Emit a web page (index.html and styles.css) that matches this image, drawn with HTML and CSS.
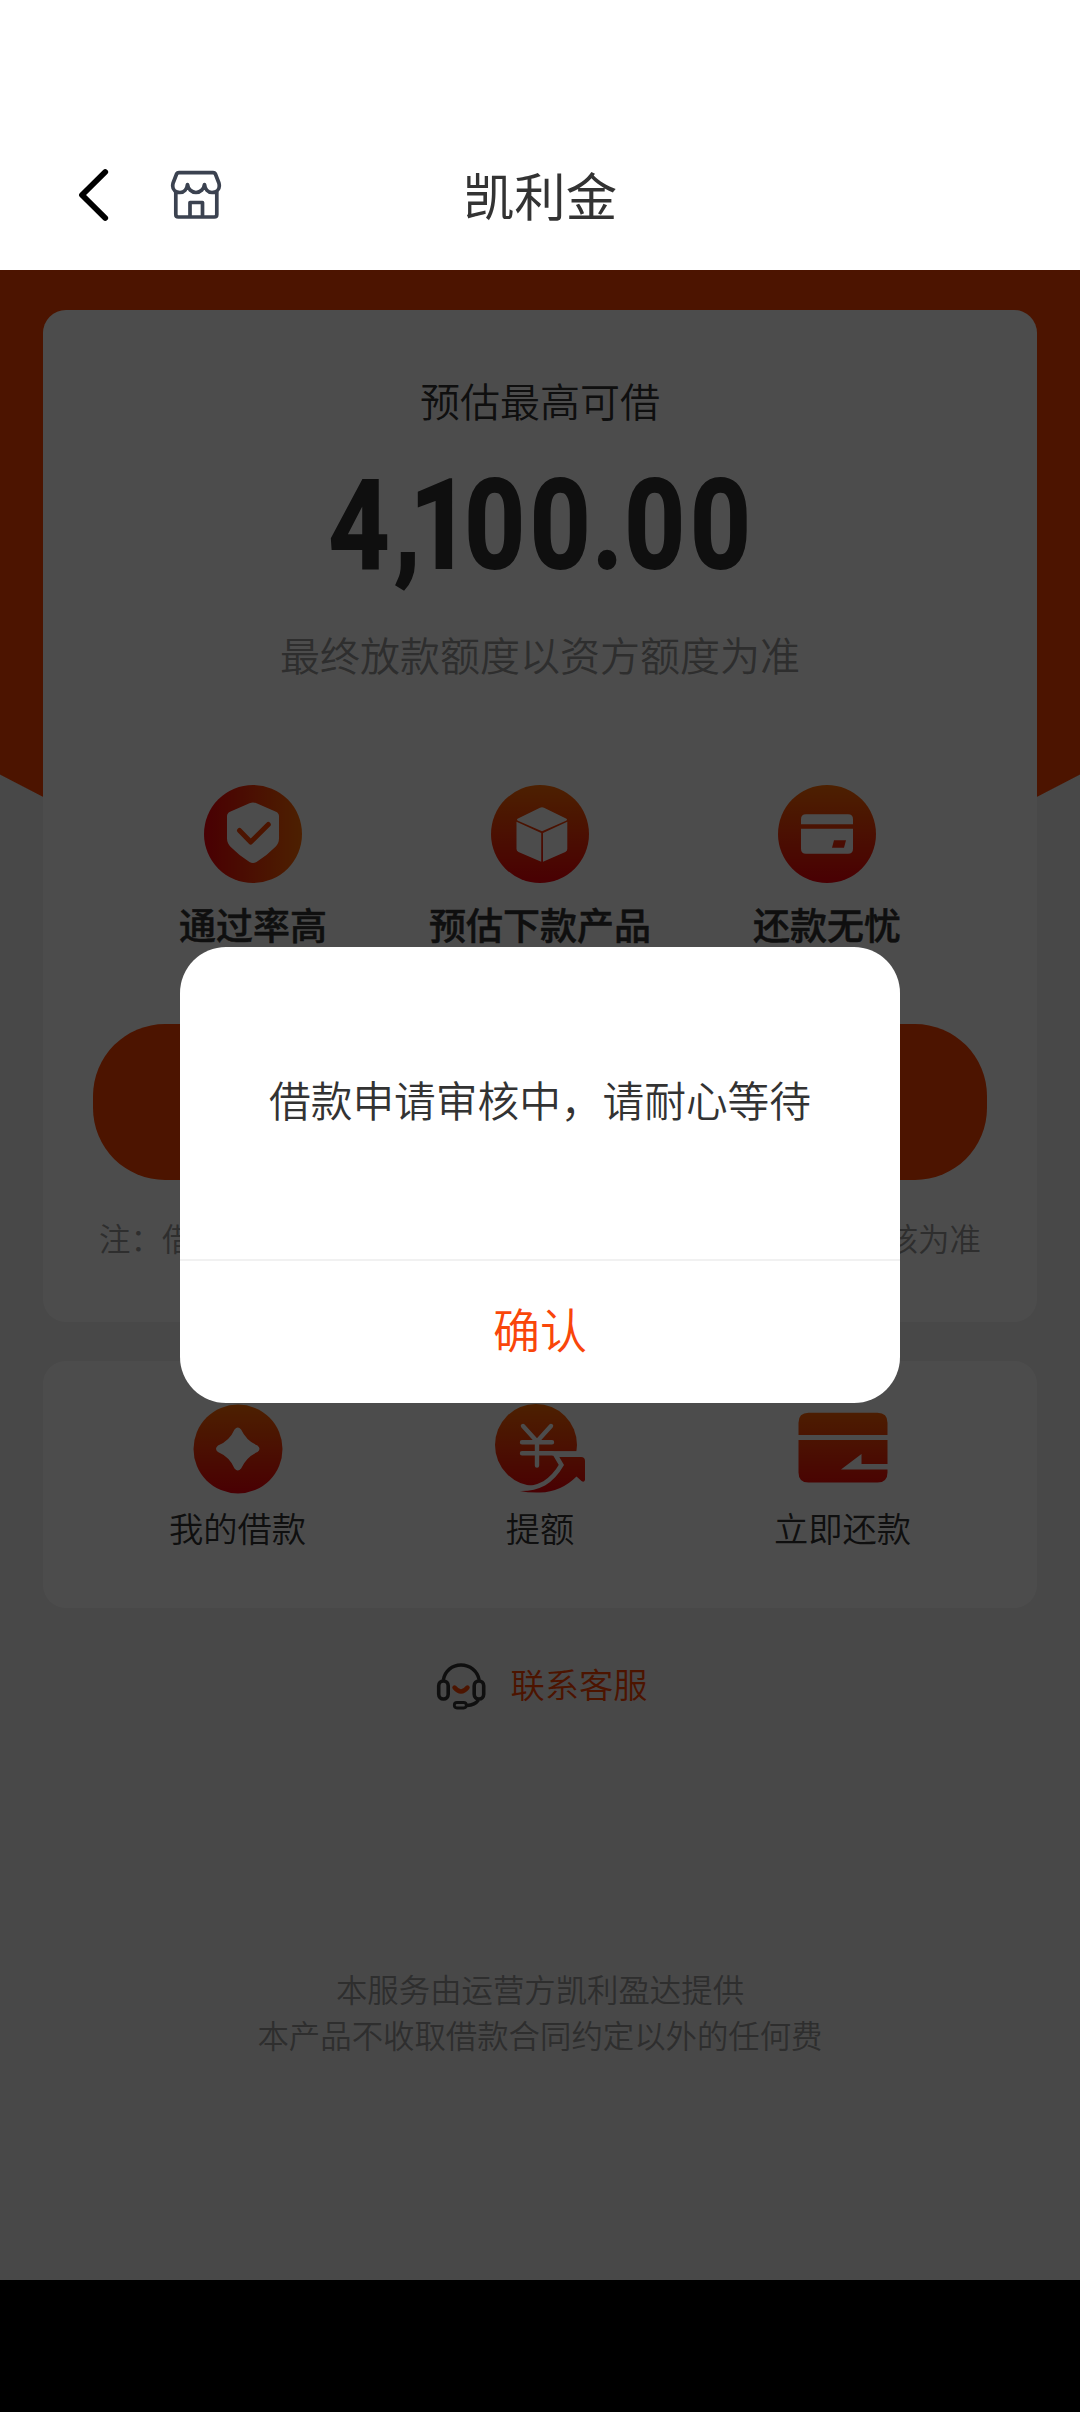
FILE: index.html
```html
<!DOCTYPE html>
<html lang="zh-CN">
<head>
<meta charset="utf-8">
<title>凯利金</title>
<link rel="stylesheet" href="styles.css">
</head>
<body>
<header class="navbar">
  <div class="nav-actions">
    <svg class="back-icon" viewBox="0 0 30 52"><path d="M26.200 3 3 26 26.200 49"/></svg>
    <svg class="store-icon" viewBox="0 0 50 48"><path d="M8 1.700h34q2 0 2.600 1.800l3.300 8.500q.4 1.500.4 3c0 4-3.300 6.500-7.300 6.500S34 18 33.500 13.500C33 18 29.500 21.500 25 21.500S17 18 16.500 13.500C16 18 13 21.500 9 21.500S1.700 19 1.700 15q0-1.500.4-3l3.300-8.500Q6 1.700 8 1.700zM4.800 21v22.500q0 2.500 2.500 2.500h36q2.500 0 2.500-2.500V21M19 46V31.500h12.500V46"/></svg>
  </div>
  <h1 class="nav-title">凯利金</h1>
</header>

<main class="page">
  <section class="hero">
    <div class="card quota-card">
      <p class="quota-label">预估最高可借</p>
      <p class="quota-amount"><span class="amount-text">4<span class="comma">,</span><span class="one">1</span>00<span class="dot">.</span>00</span></p>
      <p class="quota-tip">最终放款额度以资方额度为准</p>
      <ul class="features">
        <li class="feature">
          <svg class="feature-icon" viewBox="0 0 98 98">
            <defs><linearGradient id="warm-x"><stop offset="0" stop-color="#f5000a"/><stop offset="1" stop-color="#ff6c04"/></linearGradient>
            <linearGradient id="warm-y" x2="0" y2="1"><stop offset="0" stop-color="#ff6c04"/><stop offset="1" stop-color="#f5000a"/></linearGradient></defs>
            <circle cx="49" cy="49" r="49" fill="url(#warm-x)"/>
            <path d="M45.500 18.300q3.500-1.800 7 0L72 26.800q3 1.500 3 4.500v22q0 5-3.500 8.500Q62.500 71 52.500 77q-3.500 2-7 0Q35.500 71 26.500 61.800 23 58 23 53.300v-22q0-3 3-4.500z" fill="#fff"/>
            <path d="M35.500 45.500 46.700 57 64.300 39.500" fill="none" stroke="#ff4400" stroke-width="5" stroke-linecap="round" stroke-linejoin="round"/>
          </svg>
          <span>通过率高</span>
        </li>
        <li class="feature">
          <svg class="feature-icon" viewBox="0 0 98 98">
            <circle cx="49" cy="49" r="49" fill="url(#warm-y)"/>
            <path d="M49 22.700q2-1 4 0L75 33.500q2 1.200 0 2.200L51 46.300 27 35.700q-2-1 0-2.200zM25.500 36.800 50.200 48v28.700L27.500 67q-2-1-2-3zM76.300 36.800 52 48v28.700L74.300 67q2-1 2-3z" fill="#fff"/>
          </svg>
          <span>预估下款产品</span>
        </li>
        <li class="feature">
          <svg class="feature-icon" viewBox="0 0 98 98">
            <circle cx="49" cy="49" r="49" fill="url(#warm-y)"/>
            <path d="M23 39.300v-5q0-5 5-5h42q5 0 5 5v5zM23 43.700h52v20q0 5-5 5H28q-5 0-5-5zM56 55.300l-2 7.400h12l2-7.400z" fill="#fff" fill-rule="evenodd"/>
          </svg>
          <span>还款无忧</span>
        </li>
      </ul>
      <button class="apply-button" type="button" aria-label="申请"></button>
      <p class="quota-note">注：借款额度、利率及放款时间等信息最终以合作机构审核为准</p>
    </div>
  </section>

  <nav class="card shortcuts">
    <a class="shortcut">
      <svg class="shortcut-icon" viewBox="0 0 90 90">
        <circle cx="45" cy="45" r="44.500" fill="url(#warm-y)"/>
        <path d="M41.500 25.500q3.300-4 6.600 0Q53.500 37 64.500 41.500q4 3.300 0 6.600Q53.500 53 48.100 64.500q-3.300 4-6.600 0Q36.500 53 25 48.100q-4-3.300 0-6.600Q36.500 37 41.500 25.500z" fill="#fff"/>
      </svg>
      <span>我的借款</span>
    </a>
    <a class="shortcut">
      <svg class="shortcut-icon" viewBox="0 0 90 90">
        <defs><linearGradient id="warm-icon" gradientUnits="userSpaceOnUse" x1="0" y1="0" x2="0" y2="90"><stop offset="0" stop-color="#ff6c04"/><stop offset="1" stop-color="#f5000a"/></linearGradient></defs>
        <circle cx="41" cy="41" r="41" fill="url(#warm-icon)"/>
        <path d="M64.300 53H86q4 0 4 4v19q-1 3-3.500 1l-5-4.500Q66 88 45 88.500q-12 .3-20-1.500 14 .3 25-5.500Q61 75 69 61z" fill="none" stroke="#fff" stroke-width="9"/>
        <path d="M28 22 42 37.500 56 22M27 38.300h30M27 49.300h30M42 38v23.500" fill="none" stroke="#fff" stroke-width="4.400" stroke-linecap="round"/>
        <path d="M64.300 53H86q4 0 4 4v19q-1 3-3.500 1l-5-4.500Q66 88 45 88.500q-12 .3-20-1.500 14 .3 25-5.500Q61 75 69 61z" fill="url(#warm-icon)"/>
        <path d="M57 49.300h26" stroke="#fff" stroke-width="4.400"/>
      </svg>
      <span>提额</span>
    </a>
    <a class="shortcut">
      <svg class="shortcut-icon" viewBox="0 0 90 90">
        <path d="M.5 31V18.700q0-10 10-10h69q10 0 10 10V31zM.5 36h89v24h-26V50L43 65.500h46.500v3q0 10-10 10h-69q-10 0-10-10z" fill="url(#warm-icon)"/>
      </svg>
      <span>立即还款</span>
    </a>
  </nav>

  <a class="contact">
    <svg class="contact-icon" viewBox="0 0 49 47">
      <path d="M6.300 17C8 8 15 2 24 2s16.500 6 18.200 15M41.500 37Q38 42 30 42.500" fill="none" stroke="#333" stroke-width="3.400"/>
      <rect x="1.700" y="18" width="9.500" height="18" rx="4.700" fill="none" stroke="#333" stroke-width="3.600"/>
      <rect x="37.200" y="18" width="9.500" height="18" rx="4.700" fill="none" stroke="#333" stroke-width="3.600"/>
      <rect x="17.300" y="39.500" width="12" height="5.500" rx="2.700" fill="none" stroke="#333" stroke-width="2.800"/>
      <path d="M17.500 24.500Q24 32.500 30.500 24.500" fill="none" stroke="#ff4400" stroke-width="4.400" stroke-linecap="round"/>
    </svg>
    <span>联系客服</span>
  </a>

  <footer class="footer">
    <p>本服务由运营方凯利盈达提供</p>
    <p>本产品不收取借款合同约定以外的任何费</p>
  </footer>

  <div class="overlay">
    <div class="dialog" role="dialog">
      <p class="dialog-message">借款申请审核中，请耐心等待</p>
      <button class="dialog-confirm" type="button">确认</button>
    </div>
  </div>
</main>
<div class="system-bar"></div>
</body>
</html>
```
FILE: styles.css
```css
* { box-sizing: border-box; margin: 0; padding: 0; }

body {
  width: 1080px;
  height: 2412px;
  display: flex;
  flex-direction: column;
  overflow: hidden;
  background: #fff;
  color: #333;
  font-family: "Noto Sans CJK SC", sans-serif;
  font-weight: 350;
}

ul { list-style: none; }
button { border: 0; font: inherit; }
svg { display: block; flex: none; overflow: visible; }

.navbar {
  height: 270px;
  padding: 122px 79px 0;
  display: grid;
  grid-template-columns: 1fr auto 1fr;
}
.nav-actions { display: flex; align-items: center; gap: 62px; height: 146px; }
.back-icon { width: 30px; height: 52px; fill: none; stroke: #000; stroke-width: 5.800px; stroke-linecap: round; stroke-linejoin: round; }
.store-icon { width: 50px; height: 48px; fill: none; stroke: #3b4250; stroke-width: 3.700px; stroke-linejoin: round; }
.nav-title { font-size: 51.400px; font-weight: 400; line-height: 144px; height: 148px; }

.page {
  position: relative;
  height: 2010px;
  flex: none;
  display: flex;
  flex-direction: column;
  background: #f1f1f1;
}

.hero {
  padding: 40px 43px 0;
  background:
    linear-gradient(#ff4400, #ff4400) 0 0 / 100% 504px no-repeat,
    linear-gradient(to bottom left, #ff4400 50%, transparent 50.200%) 0 504px / 540px 280px no-repeat,
    linear-gradient(to bottom right, #ff4400 50%, transparent 50.200%) 540px 504px / 540px 280px no-repeat;
}

.card { background: #fff; border-radius: 23px; }

.quota-card {
  height: 1012px;
  display: flex;
  flex-direction: column;
  align-items: center;
}
.quota-label { margin-top: 60px; font-size: 40px; line-height: 60px; }
.quota-amount { height: 150px; margin-top: 21px; padding-left: 4px; font: 700 124px/150px Roboto, sans-serif; letter-spacing: 6px; -webkit-text-stroke: 2px #333; }
.amount-text { display: inline-block; transform: scaleX(.85); }
.comma { letter-spacing: -12px; }
.one { letter-spacing: -7px; }
.dot { margin: 0 -4px; }
.quota-tip { margin-top: 23px; font-size: 40px; line-height: 60px; color: #999; }

.features { display: grid; grid-template-columns: repeat(3, 287px); margin-top: 101px; }
.feature { display: flex; flex-direction: column; align-items: center; gap: 13px; font-size: 37px; line-height: 56px; font-weight: 500; white-space: nowrap; }
.feature span { -webkit-text-stroke: .5px #333; }
.feature-icon { width: 98px; height: 98px; }

.apply-button { width: 894px; height: 156px; margin-top: 72px; border-radius: 72px; background: #ff4400; }
.quota-note { margin-top: 34px; font-size: 31.500px; line-height: 46px; color: #999; white-space: nowrap; }

.shortcuts {
  width: 994px;
  height: 247px;
  margin: 39px 43px 0;
  padding-top: 43px;
  display: grid;
  grid-template-columns: repeat(3, 302.500px);
  justify-content: center;
}
.shortcut { display: flex; flex-direction: column; align-items: center; gap: 7px; font-size: 34.300px; line-height: 52px; }
.shortcut-icon { width: 90px; height: 90px; }

.contact {
  margin-top: 52px;
  padding-left: 5px;
  height: 52px;
  display: flex;
  justify-content: center;
  align-items: center;
  gap: 24px;
  font-size: 34.300px;
  line-height: 46px;
  color: #ff4400;
}
.contact span { padding-bottom: 6px; }
.contact-icon { width: 49px; height: 47px; }

.footer { margin-top: 254px; text-align: center; font-size: 31.400px; line-height: 46px; color: #999; }

.overlay {
  position: absolute;
  inset: 0;
  display: flex;
  justify-content: center;
  align-items: flex-start;
  padding-top: 677px;
  background: rgba(0, 0, 0, .7);
}
.dialog {
  width: 720px;
  height: 456px;
  display: flex;
  flex-direction: column;
  overflow: hidden;
  border-radius: 46px;
  background: #fff;
  text-align: center;
}
.dialog-message { height: 312px; font-size: 41.700px; line-height: 305px; }
.dialog-confirm { flex: 1; padding-bottom: 8px; border-top: 2px solid #f1f1f1; background: none; font-size: 47px; line-height: 130px; color: #f9460a; }

.system-bar { flex: 1; background: #000; }
```
